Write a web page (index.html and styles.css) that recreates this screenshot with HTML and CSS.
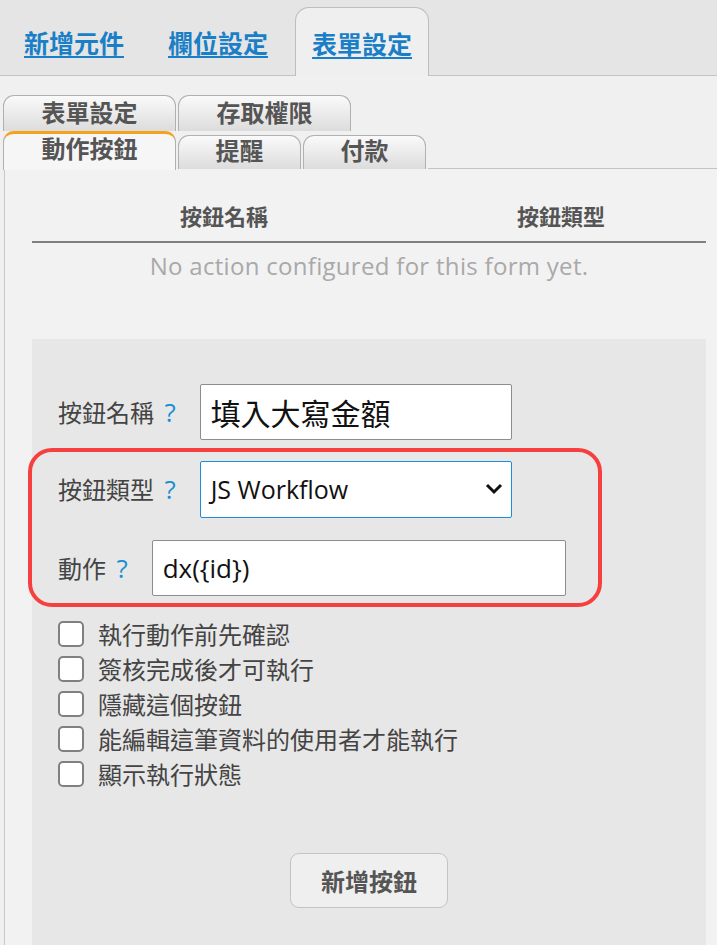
FILE: index.html
```html
<!DOCTYPE html>
<html lang="zh-Hant">
<head>
    <meta charset="UTF-8">
    <meta name="viewport" content="width=device-width, initial-scale=1.0">
    <title>表單設定</title>
    <link rel="stylesheet" href="styles.css">
</head>
<body>
    <div class="topbar">
        <a href="#" class="top-tab">新增元件</a>
        <a href="#" class="top-tab">欄位設定</a>
        <a href="#" class="top-tab active">表單設定</a>
    </div>

    <div class="sub-area">
        <div class="sub-tabs">
            <div class="sub-row">
                <div class="sub-tab wide">表單設定</div>
                <div class="sub-tab wide">存取權限</div>
            </div>
            <div class="sub-row">
                <div class="sub-tab wide active">動作按鈕</div>
                <div class="sub-tab">提醒</div>
                <div class="sub-tab">付款</div>
                <div class="sub-fill"></div>
            </div>
        </div>

        <div class="panel">
            <div class="action-table">
                <div class="th">按鈕名稱</div>
                <div class="th">按鈕類型</div>
            </div>
            <div class="empty">No action configured for this form yet.</div>

            <div class="form-box">
                <div class="field">
                    <label class="lbl">按鈕名稱 <span class="help">?</span></label>
                    <div class="input name-input">填入大寫金額</div>
                </div>

                <div class="highlight">
                    <div class="field">
                        <label class="lbl">按鈕類型 <span class="help">?</span></label>
                        <div class="input select-box">
                            <span>JS Workflow</span>
                            <svg width="18" height="12" viewBox="0 0 18 12">
                                <path d="M2 2 L9 9 L16 2" fill="none" stroke="#111" stroke-width="3"/>
                            </svg>
                        </div>
                    </div>
                    <div class="field second">
                        <label class="lbl">動作 <span class="help">?</span></label>
                        <div class="input action-input">dx({id})</div>
                    </div>
                </div>

                <div class="checks">
                    <label class="check"><input type="checkbox"> 執行動作前先確認</label>
                    <label class="check"><input type="checkbox"> 簽核完成後才可執行</label>
                    <label class="check"><input type="checkbox"> 隱藏這個按鈕</label>
                    <label class="check"><input type="checkbox"> 能編輯這筆資料的使用者才能執行</label>
                    <label class="check"><input type="checkbox"> 顯示執行狀態</label>
                </div>

                <div class="btn-row">
                    <button class="add-btn">新增按鈕</button>
                </div>
            </div>
        </div>
    </div>
</body>
</html>
```

FILE: styles.css
```css
body {
    margin: 0;
    font-family: 'Open Sans', 'Noto Sans CJK TC', sans-serif;
    background-color: #f0f0f0;
    color: #444;
    overflow: hidden;
    height: 945px;
}

.topbar {
    display: flex;
    align-items: flex-end;
    gap: 10px;
    height: 75px;
    padding-left: 7px;
    background-color: #e5e5e5;
    border-bottom: 1px solid #c4c4c4;
}
.top-tab {
    height: 68px;
    box-sizing: border-box;
    padding: 21px 17px 0;
    font-family: 'Noto Sans CJK TC', sans-serif;
    font-size: 25px;
    font-weight: 700;
    line-height: 28px;
    color: #1a7fc6;
    text-decoration: underline;
    text-underline-offset: 3px;
}
.top-tab.active {
    height: 69px;
    margin-bottom: -1px;
    background-color: #efefef;
    border: 1px solid #bdbdbd;
    border-bottom: none;
    border-radius: 14px 14px 0 0;
    padding-left: 16px;
    padding-right: 16px;
}

.sub-area {
    padding-top: 19px;
}
.sub-tabs {
    padding-left: 3px;
}
.sub-row {
    display: flex;
    align-items: flex-end;
    gap: 2px;
}
.sub-tab {
    box-sizing: border-box;
    width: 123px;
    height: 36px;
    border: 1px solid #b0b0b0;
    border-bottom: none;
    border-radius: 11px 11px 0 0;
    background: linear-gradient(#fafafa, #dcdcdc);
    font-family: 'Noto Sans CJK TC', sans-serif;
    font-size: 24px;
    font-weight: 700;
    line-height: 31px;
    color: #555;
    text-align: center;
}
.sub-tab.wide {
    width: 173px;
}
.sub-row + .sub-row .sub-tab {
    height: 34px;
    line-height: 28px;
}
.sub-row + .sub-row .sub-tab.active {
    height: 39px;
    margin-bottom: -1px;
    background: #f6f6f6;
    border-top: 3px solid #f5a31f;
    line-height: 28px;
}
.sub-fill {
    flex: 1;
    border-bottom: 1px solid #c4c4c4;
}

.panel {
    margin-left: 4px;
    padding: 30px 11px 0 27px;
    background-color: #f2f2f2;
    border-left: 1px solid #c8c8c8;
    height: 800px;
}

.action-table {
    display: grid;
    grid-template-columns: 384px 1fr;
    border-bottom: 2px solid #808080;
}
.th {
    font-family: 'Noto Sans CJK TC', sans-serif;
    font-size: 22px;
    font-weight: 700;
    line-height: 32px;
    padding-bottom: 10px;
    color: #555;
    text-align: center;
}
.empty {
    padding: 8px 0;
    font-size: 24px;
    line-height: 30px;
    color: #a9a9a9;
    text-align: center;
    letter-spacing: 0.3px;
}

.form-box {
    margin-top: 50px;
    padding: 45px 0 40px 26px;
    background-color: #e7e7e7;
}

.field {
    display: flex;
    align-items: center;
    height: 56px;
}
.field.second {
    margin-top: 23px;
}
.lbl {
    font-family: 'Noto Sans CJK TC', sans-serif;
    font-size: 24px;
    line-height: 30px;
    color: #444;
    margin-right: 24px;
    white-space: nowrap;
}
.help {
    font-family: 'Open Sans', sans-serif;
    font-size: 26px;
    color: #1a8fd0;
    margin-left: 5px;
}

.input {
    box-sizing: border-box;
    height: 56px;
    padding-left: 10px;
    background-color: #fff;
    border: 1px solid #8c8c8c;
    border-radius: 2px;
    display: flex;
    align-items: center;
    color: #111;
}
.name-input {
    width: 312px;
    font-family: 'Noto Sans CJK TC', sans-serif;
    font-size: 30px;
}
.select-box {
    width: 312px;
    height: 57px;
    border-color: #1a8fd8;
    justify-content: space-between;
    padding-right: 8px;
    font-size: 25px;
}
.action-input {
    width: 414px;
    font-size: 26px;
}

.highlight {
    margin: 8px 0 0 -30px;
    padding: 9px 0 7px 26px;
    width: 540px;
    border: 4px solid #f5403f;
    border-radius: 24px;
}

.checks {
    margin-top: 9px;
}
.check {
    display: flex;
    align-items: center;
    height: 35px;
    font-family: 'Noto Sans CJK TC', sans-serif;
    font-size: 24px;
    color: #444;
}
.check input {
    appearance: none;
    -webkit-appearance: none;
    box-sizing: border-box;
    width: 26px;
    height: 26px;
    margin: 0 14px 0 0;
    background-color: #fff;
    border: 2px solid #808080;
    border-radius: 5px;
}

.btn-row {
    display: flex;
    justify-content: center;
    margin-top: 62px;
    margin-left: -26px;
}
.add-btn {
    width: 158px;
    height: 55px;
    background-color: #efefef;
    border: 1px solid #c4c4c4;
    border-radius: 9px;
    font-family: 'Noto Sans CJK TC', sans-serif;
    font-size: 24px;
    font-weight: 700;
    color: #555;
}
```
